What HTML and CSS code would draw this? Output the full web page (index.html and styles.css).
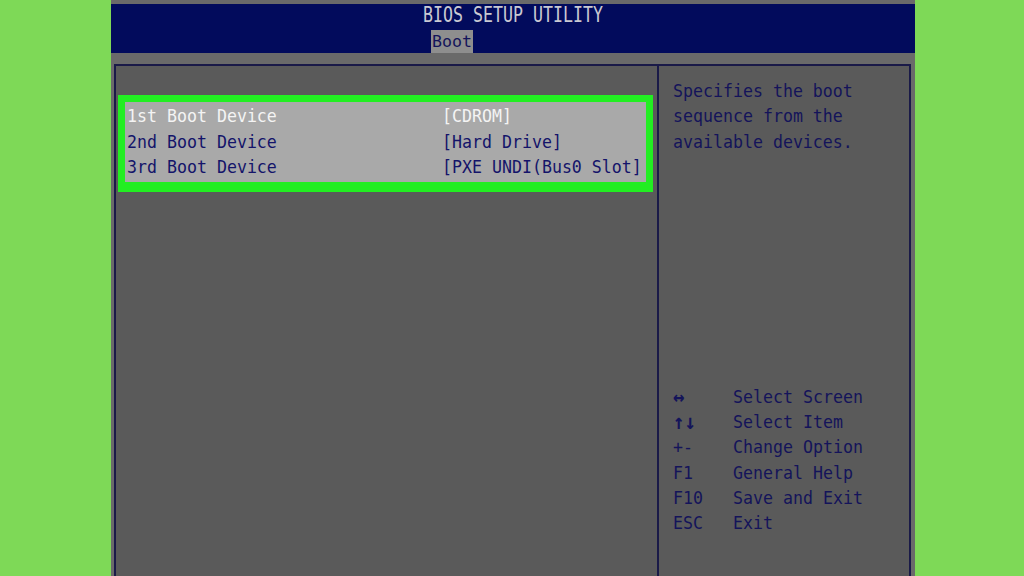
FILE: index.html
```html
<!DOCTYPE html>
<html lang="en">
<head>
    <meta charset="UTF-8">
    <title>BIOS Setup Utility - Boot</title>
    <link rel="stylesheet" href="styles.css">
</head>
<body>
    <div class="screen">
        <!-- Title bar with tab -->
        <div class="header">
            <div class="title">BIOS SETUP UTILITY</div>
            <div class="tabs">
                <span class="tab active">Boot</span>
            </div>
        </div>

        <div class="band"></div>

        <div class="panel">
            <div class="main">
                <div class="boot-box">
                    <div class="row selected">
                        <span class="label">1st Boot Device</span>
                        <span class="value">[CDROM]</span>
                    </div>
                    <div class="row">
                        <span class="label">2nd Boot Device</span>
                        <span class="value">[Hard Drive]</span>
                    </div>
                    <div class="row">
                        <span class="label">3rd Boot Device</span>
                        <span class="value">[PXE UNDI(Bus0 Slot]</span>
                    </div>
                </div>
            </div>

            <div class="side">
                <p class="help">Specifies the boot<br>sequence from the<br>available devices.</p>

                <div class="keys">
                    <span class="key arrow">↔</span><span>Select Screen</span>
                    <span class="key arrow">↑↓</span><span>Select Item</span>
                    <span class="key">+-</span><span>Change Option</span>
                    <span class="key">F1</span><span>General Help</span>
                    <span class="key">F10</span><span>Save and Exit</span>
                    <span class="key">ESC</span><span>Exit</span>
                </div>
            </div>
        </div>
    </div>
</body>
</html>
```

FILE: styles.css
```css
* {
    margin: 0;
    padding: 0;
    box-sizing: border-box;
}

body {
    background: #7ed957;
    font-family: 'DejaVu Sans Mono', 'Liberation Mono', monospace;
    font-size: 16.6px;
    color: #14145a;
    overflow: hidden;
    height: 576px;
}

.screen {
    width: 804px;
    height: 576px;
    margin-left: 111px;
    padding-top: 4px;
    background: #6a6a6a;
    display: flex;
    flex-direction: column;
}

/* Header */
.header {
    height: 49px;
    background: #020b5c;
    display: flex;
    flex-direction: column;
}

.title {
    align-self: center;
    color: #c9c9d2;
    line-height: 22px;
    padding-top: 1px;
    transform: scaleY(1.25);
}

.tabs {
    display: flex;
    margin-top: 3px;
    padding-left: 320px;
}

.tab {
    display: block;
    height: 23px;
    line-height: 24px;
    padding: 0 1px;
    color: #14145a;
}

.tab.active {
    background: #8e8e8e;
}

.band {
    height: 11px;
    background: #6a6a6a;
}

/* Main panel */
.panel {
    flex: 1;
    margin: 0 4px 0 3px;
    border: 2px solid #1a1a48;
    border-bottom: none;
    background: #5a5a5a;
    display: grid;
    grid-template-columns: 543px 1fr;
}

.main {
    border-right: 2px solid #1a1a48;
    padding: 29px 3px 0 2px;
}

.boot-box {
    width: 535px;
    border: 7px solid #22ee22;
    border-bottom-width: 10px;
    background: #a9a9a9;
    padding: 1px 0 2px 2px;
}

.row {
    display: grid;
    grid-template-columns: 315px 1fr;
    line-height: 25.5px;
    color: #14146a;
}

.row.selected {
    color: #f4f4f4;
}

.label, .value {
    display: inline-block;
    transform: scaleY(1.1);
}

/* Side help panel */
.side {
    padding: 12px 0 0 14px;
}

.help {
    line-height: 23.3px;
    transform: scaleY(1.1);
    transform-origin: top left;
}

.keys {
    margin-top: 236px;
    display: grid;
    grid-template-columns: 60px auto;
    line-height: 23.1px;
    transform: scaleY(1.1);
    transform-origin: top left;
}

.key {
    white-space: nowrap;
}

.key.arrow {
    font-weight: bold;
    font-size: 19px;
}
```
